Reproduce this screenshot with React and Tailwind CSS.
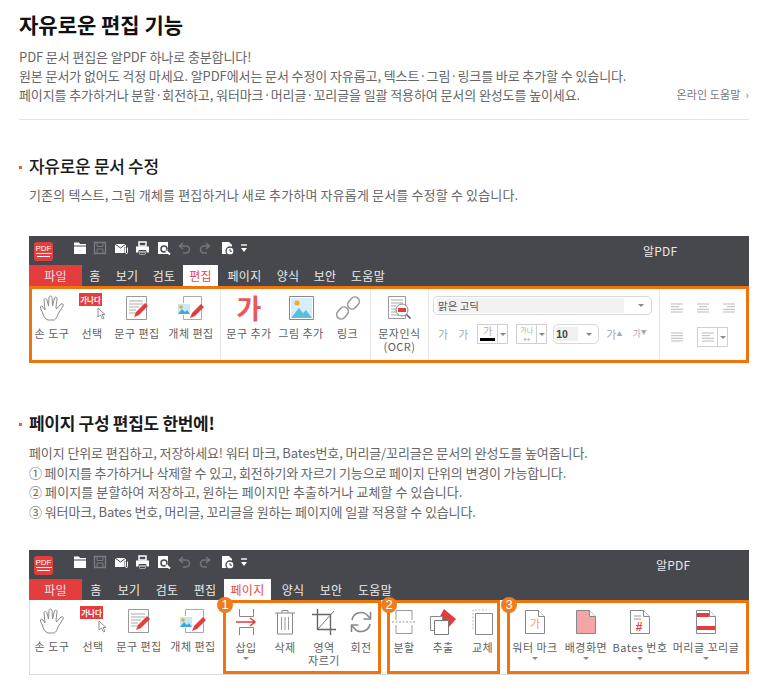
import React from 'react';

const kr = { fontFamily: '"Noto Sans CJK KR", "Noto Sans", sans-serif' };

const Svg = ({ w = 30, h = 30, children, className = '' }) => (
  <svg width={w} height={h} viewBox={`0 0 ${w} ${h}`} fill="none" className={className}>
    {children}
  </svg>
);

const PdfLogo = () => (
  <div className="w-[19px] h-[19px] rounded-[3px] bg-[#e33d3d] flex flex-col items-center justify-center">
    <span className="text-[8px] leading-[8px] text-white font-['Liberation_Sans',sans-serif] border-b border-white">PDF</span>
    <span className="w-[13px] h-px bg-white mt-[2px]" />
  </div>
);

const QuickIcons = () => (
  <div className="flex items-center mb-[6px]">
    {/* folder */}
    <Svg w={14} h={14} className="ml-[20px]"><path d="M1 1.500h5l1 1.500h6V13H1z" fill="#fff" /><path d="M1 5h12" stroke="#47484d" /></Svg>
    {/* save, dimmed */}
    <Svg w={14} h={14} className="ml-[6px]"><path d="M1.500 1.500h11v11h-11z" stroke="#777a80" strokeWidth="1.400" /><path d="M4 1.500h6v4H4zM4 8h6v4.500H4z" stroke="#777a80" /></Svg>
    {/* mail with clip */}
    <Svg w={15} h={14} className="ml-[7px]"><path d="M1 3h11v9H1z" fill="#fff" /><path d="M1 3l5.500 4L12 3" stroke="#47484d" /><path d="M10.500 6h4v8h-4z" fill="#47484d" /><path d="M11.500 6.500v5a1 1 0 002 0v-5" stroke="#fff" /></Svg>
    {/* print */}
    <Svg w={15} h={15} className="ml-[6px]"><path d="M4 1h7v4H4z" stroke="#fff" strokeWidth="1.500" /><path d="M1 5.500h13v6H1z" fill="#fff" /><path d="M4 9.500h7V14H4z" fill="#fff" stroke="#47484d" /><path d="M5 11h5M5 12.500h5" stroke="#47484d" /></Svg>
    {/* preview */}
    <Svg w={15} h={15} className="ml-[7px]"><path d="M1 1h10v12H1z" fill="#fff" /><circle cx="7" cy="8" r="3" stroke="#47484d" strokeWidth="1.500" /><path d="M9 10l4 3.500" stroke="#fff" strokeWidth="2" /></Svg>
    {/* undo / redo */}
    <Svg w={13} h={12} className="ml-[6px]"><path d="M5 1L1.500 4 5 7M2 4h6a3 3 0 010 7H5" stroke="#72747a" strokeWidth="1.600" /></Svg>
    <Svg w={13} h={12} className="ml-[7px]"><path d="M8 1l3.500 3L8 7M11 4H6a3 3 0 000 7h3" stroke="#72747a" strokeWidth="1.600" /></Svg>
    {/* document with clock */}
    <Svg w={15} h={15} className="ml-[10px]"><path d="M1 1h7l3 3v9H1z" fill="#fff" /><circle cx="9" cy="10" r="4" fill="#fff" stroke="#47484d" strokeWidth="1.300" /><path d="M9 8v2.200h2" stroke="#47484d" /></Svg>
    {/* customize caret */}
    <Svg w={8} h={9} className="ml-[4px]"><path d="M1 1h6" stroke="#fff" strokeWidth="1.400" /><path d="M1 4h6L4 8z" fill="#fff" /></Svg>
  </div>
);

const TabBar = ({ tabs }) => (
  <div className="flex items-end h-[21px] text-[12px] tracking-[0.3px] text-[#e8e8ea]" style={kr}>
    {tabs.map((t) =>
      t.kind === 'file' ? (
        <div key={t.label} className="bg-[#e33d3d] h-full flex items-center justify-center" style={{ width: t.w }}>{t.label}</div>
      ) : t.kind === 'active' ? (
        <div key={t.label} className="bg-white text-[#e8474a] h-full flex items-center justify-center" style={{ width: t.w, marginLeft: t.ml }}>{t.label}</div>
      ) : (
        <div key={t.label} className="h-full flex items-center justify-center whitespace-nowrap" style={{ width: t.w, marginLeft: t.ml }}>{t.label}</div>
      )
    )}
  </div>
);

const Caret = ({ className = '' }) => (
  <span className={`block w-0 h-0 border-l-[3px] border-r-[3px] border-t-[3px] border-l-transparent border-r-transparent border-t-[#8a8a8a] ${className}`} />
);

const Item = ({ w, label, caret, children }) => (
  <div className="flex flex-col items-center shrink-0" style={{ width: w }}>
    <div className="h-[34px] pt-[2px] box-content flex items-center justify-center">{children}</div>
    <div className="mt-[2px] text-[11px] leading-[13px] tracking-[0.5px] text-[#606060] text-center whitespace-pre-line" style={kr}>{label}</div>
    {caret && <Caret className="mt-[3px]" />}
  </div>
);

const HandIcon = () => (
  <Svg w={26} h={26}>
    <path
      d="M9 25C6 24 5 22 4 19L1.500 13C1 11 3 10.500 4 12L6 15L5 5C5 3 7.500 3 8 5L9.500 11L10 2.500C10 .5 13 .5 13 2.500L13.500 11L15.500 3C16 1.500 18.500 2 18 4L17 12L17.500 14L22 9C23.500 8 25 9.500 24 11L19 19C18 22 17 24 15.500 25Z"
      stroke="#8a8a8a"
      strokeLinejoin="round"
    />
  </Svg>
);

const SelectIcon = () => (
  <div className="relative w-[26px] h-[30px]">
    <span className="absolute left-0 top-0 w-[23px] h-[13px] bg-[#e33d3d] text-white text-[7.500px] leading-[13px] font-bold text-center whitespace-nowrap" style={kr}>가나다</span>
    <svg className="absolute left-[18px] top-[14px]" width="10" height="13" viewBox="0 0 10 13" fill="none"><path d="M1 1v9l2.500-2 2 4 1.500-.8-2-3.700H8z" fill="#fff" stroke="#777" strokeWidth="0.800" /></svg>
  </div>
);

const TextEditIcon = () => (
  <Svg w={26} h={26}>
    <path d="M2.500 1.500h20v23h-20z" fill="#fff" stroke="#999" />
    <path d="M5 6h14M5 9h14M5 12h10M5 15h7M5 18h7" stroke="#aaa" />
    <path d="M10 22l2-5L21 8l3 3-9 9z" fill="#e33d3d" />
  </Svg>
);

const ObjectEditIcon = () => (
  <Svg w={30} h={26}>
    <path d="M7.500 1.500h18v23h-18z" fill="#fff" stroke="#aaa" />
    <path d="M1 8h14v12H1z" fill="#fff" />
    <path d="M2 9h12v10H2z" fill="#c7e9f6" />
    <circle cx="5" cy="12" r="1.800" fill="#f5a623" />
    <path d="M2 19l4-5 3 3 2-2 3 4z" fill="#3ea9d6" />
    <path d="M14 23l2-5 9-9 3 3-9 9z" fill="#e33d3d" />
  </Svg>
);

const AddTextIcon = () => (
  <span className="text-[27px] leading-[30px] font-bold text-[#e8595c]" style={kr}>가</span>
);

const AddImageIcon = () => (
  <Svg w={25} h={24}>
    <path d="M.5 .5h24v23H.5z" fill="#fff" stroke="#888" />
    <path d="M2 2h21v20H2z" fill="#d5eef9" />
    <circle cx="8" cy="7" r="2.500" fill="#f5a623" />
    <path d="M2 22l8-10 4 5 3-3 6 8z" fill="#5bbde4" />
  </Svg>
);

const LinkIcon = () => (
  <Svg w={26} h={26}>
    <rect x="14" y="1.500" width="9" height="13" rx="4.500" transform="rotate(42 18.500 8)" stroke="#999" strokeWidth="1.600" />
    <rect x="3" y="11.500" width="9" height="13" rx="4.500" transform="rotate(42 7.500 18)" stroke="#999" strokeWidth="1.600" />
  </Svg>
);

const OcrIcon = () => (
  <Svg w={26} h={26}>
    <path d="M1.500 1.500h17v22h-17z" fill="#fff" stroke="#999" />
    <path d="M4 5h12M4 8h12M4 11h5M4 14h5M4 17h5M4 20h8" stroke="#aaa" />
    <circle cx="15" cy="15" r="6" fill="#fff" stroke="#888" />
    <path d="M11 13h8v4h-8z" fill="#e33d3d" />
    <path d="M19.500 19.500l4 4" stroke="#555" strokeWidth="1.600" />
  </Svg>
);

const InsertIcon = () => (
  <Svg w={24} h={26}>
    <path d="M5.500 0v7.500h14V0M5.500 26v-7.500h14V26" stroke="#888" />
    <path d="M2 13h19M16 9l5 4-5 4" stroke="#e33d3d" strokeWidth="1.500" />
  </Svg>
);

const TrashIcon = () => (
  <Svg w={22} h={26}>
    <path d="M1 4h20M8 4V1.500h6V4" stroke="#888" />
    <path d="M3.500 4v21h15V4" stroke="#888" />
    <path d="M7.500 8v13M11 8v13M14.500 8v13" stroke="#999" />
  </Svg>
);

const CropIcon = () => (
  <Svg w={24} h={26}>
    <path d="M5.500 0v20.500H24M0 5.500h18.500V26" stroke="#666" strokeWidth="1.400" />
    <path d="M6 20L22 2" stroke="#777" />
  </Svg>
);

const RotateIcon = () => (
  <Svg w={22} h={24}>
    <path d="M2 10a9 9 0 0116-4l2 2M20 14a9 9 0 01-16 4l-2-2" stroke="#888" strokeWidth="1.600" />
    <path d="M20.500 2v7h-7M1.500 22v-7h7" stroke="#888" strokeWidth="1.600" />
  </Svg>
);

const SplitIcon = () => (
  <Svg w={24} h={26}>
    <path d="M4 11V1.500h16V11M4 16v8.500h16V16" stroke="#999" />
    <path d="M0 13h24" stroke="#999" strokeDasharray="2 1.500" />
  </Svg>
);

const ExtractIcon = () => (
  <Svg w={28} h={26}>
    <path d="M15 0l12 10-7 8-10-9z" fill="#e33d3d" />
    <path d="M1.500 7.500h12v14h-12z" fill="#fff" stroke="#888" />
    <path d="M5.500 11.500h14v14h-14z" fill="#fff" stroke="#777" />
  </Svg>
);

const ReplaceIcon = () => (
  <Svg w={22} h={26}>
    <path d="M1 20V1h14" stroke="#bbb" strokeDasharray="2 1.500" />
    <path d="M3.500 4.500h17v21h-17z" fill="#fff" stroke="#888" />
  </Svg>
);

const Page = ({ fill = '#fff', children }) => (
  <Svg w={22} h={26}>
    <path d="M1.500 1.500h13l6 6v17h-19z" fill={fill} stroke="#888" />
    <path d="M14.500 1.500v6h6" fill="#fff" stroke="#888" />
    {children}
  </Svg>
);

const Toolbar = ({ tabs, titleMl, children }) => (
  <div className="ml-[29px] w-[720px]">
    <div className="bg-[#47484d]">
      <div className="flex items-center h-[29px] pl-[5px] pt-[1px]">
        <PdfLogo />
        <QuickIcons />
        <span className="text-[12px] text-[#e8e8ea] tracking-[0.2px]" style={{ ...kr, marginLeft: titleMl }}>알PDF</span>
      </div>
      <TabBar tabs={tabs} />
    </div>
    {children}
  </div>
);

const FontControls = () => (
  <div className="flex flex-col w-[231px] px-[4px] pt-[7px] border-r border-[#e5e5e5] shrink-0">
    <div className="h-[19px] rounded-[5px] border border-[#d8d8d8] flex items-center pl-[3px] pr-[7px] w-[219px]">
      <div className="bg-[#f2f2f2] flex-1 h-[15px] text-[10.500px] leading-[15px] text-[#555] mr-[14px] pl-[1px]" style={kr}>맑은 고딕</div>
      <Caret />
    </div>
    <div className="flex items-center mt-[9px] text-[11px] text-[#aaa]" style={kr}>
      <span className="ml-[5px]">가</span>
      <span className="ml-[10px]">가</span>
      <div className="ml-[9px] w-[31px] h-[20px] border border-[#d0d0d0] flex">
        <div className="w-[20px] border-r border-[#d0d0d0] flex flex-col items-center justify-between pb-[2px]">
          <span className="text-[10px] leading-[12px]">가</span>
          <span className="w-[15px] h-[3px] bg-black" />
        </div>
        <div className="flex-1 flex items-center justify-center"><Caret /></div>
      </div>
      <div className="ml-[8px] w-[31px] h-[20px] border border-[#d0d0d0] flex">
        <div className="w-[20px] border-r border-[#d0d0d0] text-[7px] leading-[9px] text-center pt-px">가나<br />↔</div>
        <div className="flex-1 flex items-center justify-center"><Caret /></div>
      </div>
      <div className="ml-[6px] w-[46px] h-[20px] rounded-[5px] border border-[#d8d8d8] flex items-center pl-[2px] pr-[6px]">
        <span className="w-[22px] bg-[#f0f0f0] text-[10.500px] leading-[14px] text-[#444] font-['Liberation_Sans',sans-serif] font-bold">10</span>
        <Caret className="ml-auto" />
      </div>
      <span className="ml-[7px]">가<sup className="text-[6px]">▲</sup></span>
      <span className="ml-[10px] text-[9px]">가<sup className="text-[6px]">▼</sup></span>
    </div>
  </div>
);

const AlignLines = ({ side }) => (
  <Svg w={14} h={10}>
    <path d="M1 1h12M1 9h12" stroke="#bbb" />
    {side === 'left' && <path d="M1 3.700h8M1 6.300h12" stroke="#bbb" />}
    {side === 'center' && <path d="M3 3.700h8M1 6.300h12" stroke="#bbb" />}
    {side === 'right' && <path d="M5 3.700h8M1 6.300h12" stroke="#bbb" />}
    {side === 'full' && <path d="M1 3.700h12M1 6.300h12" stroke="#bbb" />}
  </Svg>
);

const AlignControls = () => (
  <div className="flex-1 pl-[10px] pt-[14px]">
    <div className="flex gap-[12px]">
      <AlignLines side="left" />
      <AlignLines side="center" />
      <AlignLines side="right" />
    </div>
    <div className="flex items-center mt-[14px]">
      <AlignLines side="full" />
      <div className="ml-[13px] w-[31px] h-[20px] border border-[#d0d0d0] flex">
        <div className="w-[20px] border-r border-[#d0d0d0] flex items-center justify-center"><AlignLines side="left" /></div>
        <div className="flex-1 flex items-center justify-center"><Caret /></div>
      </div>
    </div>
  </div>
);

const Badge = ({ n }) => (
  <span className="absolute -left-[9px] -top-[6px] w-[16px] h-[16px] rounded-full bg-[#f07d1a] text-white text-[13px] leading-[16px] text-center font-['Liberation_Sans',sans-serif]">{n}</span>
);

const Group = ({ n, className, children }) => (
  <div className={`relative flex border-[3px] border-[#f07409] h-full shrink-0 ${className}`}>
    <Badge n={n} />
    {children}
  </div>
);

const SectionTitle = ({ children, className = '' }) => (
  <h3 className={`flex items-center text-[17px] leading-[22px] text-[#1a1a1a] font-medium ml-[19px] tracking-[-0.3px] ${className}`} style={kr}>
    <span className="w-[3px] h-[3px] bg-[#e8681a] mr-[7px] mt-[3px]" />
    {children}
  </h3>
);

const firstTabs = [
  { label: '파일', kind: 'file', w: 53 },
  { label: '홈', w: 12, ml: 7 },
  { label: '보기', w: 22, ml: 15 },
  { label: '검토', w: 22, ml: 15 },
  { label: '편집', kind: 'active', w: 35, ml: 8 },
  { label: '페이지', w: 33, ml: 10 },
  { label: '양식', w: 22, ml: 16 },
  { label: '보안', w: 22, ml: 15 },
  { label: '도움말', w: 34, ml: 15 },
];

const secondTabs = [
  { label: '파일', kind: 'file', w: 53 },
  { label: '홈', w: 12, ml: 8 },
  { label: '보기', w: 22, ml: 16 },
  { label: '검토', w: 22, ml: 16 },
  { label: '편집', w: 22, ml: 16 },
  { label: '페이지', kind: 'active', w: 47, ml: 8 },
  { label: '양식', w: 22, ml: 11 },
  { label: '보안', w: 22, ml: 16 },
  { label: '도움말', w: 34, ml: 16 },
];

const EditItems = ({ widths }) => (
  <>
    <Item w={widths[0]} label="손 도구"><HandIcon /></Item>
    <Item w={widths[1]} label="선택"><SelectIcon /></Item>
    <Item w={widths[2]} label="문구 편집"><TextEditIcon /></Item>
    <Item w={widths[3]} label="개체 편집"><ObjectEditIcon /></Item>
  </>
);

const bodyText = 'text-[13px] leading-[19px] text-[#666] tracking-[-0.1px]';

export default function App() {
  return (
    <div className="w-[773px] h-[694px] overflow-hidden bg-white" style={kr}>
      <h1 className="ml-[19px] pt-[9px] text-[21px] leading-[31px] font-bold text-[#111]">자유로운 편집 기능</h1>

      <div className={`ml-[19px] mt-[7px] w-[730px] ${bodyText}`}>
        <p>PDF 문서 편집은 알PDF 하나로 충분합니다!</p>
        <p>원본 문서가 없어도 걱정 마세요. 알PDF에서는 문서 수정이 자유롭고, 텍스트·그림·링크를 바로 추가할 수 있습니다.</p>
        <div className="flex items-center justify-between">
          <p>페이지를 추가하거나 분할·회전하고, 워터마크·머리글·꼬리글을 일괄 적용하여 문서의 완성도를 높이세요.</p>
          <span className="text-[11px] text-[#777] tracking-[0.1px]">온라인 도움말 &nbsp;›</span>
        </div>
      </div>

      <div className="ml-[19px] w-[730px] mt-[15px] h-px bg-[#e3e3e3]" />

      <SectionTitle className="mt-[35px]">자유로운 문서 수정</SectionTitle>
      <p className="ml-[29px] mt-[8px] text-[13px] leading-[19px] text-[#666] tracking-[0.15px]">
        기존의 텍스트, 그림 개체를 편집하거나 새로 추가하며 자유롭게 문서를 수정할 수 있습니다.
      </p>

      <div className="mt-[32px]">
        <Toolbar tabs={firstTabs} titleMl={395}>
          <div className="h-[77px] border-[3px] border-[#f07409] flex">
            <EditItems widths={[40, 40, 50, 58]} />
            <div className="flex border-l border-[#e5e5e5] shrink-0">
              <Item w={56} label="문구 추가"><AddTextIcon /></Item>
              <Item w={48} label="그림 추가"><AddImageIcon /></Item>
              <Item w={45} label="링크"><LinkIcon /></Item>
            </div>
            <div className="border-l border-r border-[#e5e5e5] shrink-0">
              <Item w={57} label={'문자인식\n(OCR)'}><OcrIcon /></Item>
            </div>
            <FontControls />
            <AlignControls />
          </div>
        </Toolbar>
      </div>

      <SectionTitle className="mt-[49px]"><span className="font-bold">페이지 구성 편집도 한번에!</span></SectionTitle>
      <div className="ml-[29px] mt-[9px] text-[13px] leading-[19.500px] text-[#666] tracking-[-0.1px]">
        <p>페이지 단위로 편집하고, 저장하세요! 워터 마크, Bates번호, 머리글/꼬리글은 문서의 완성도를 높여줍니다.</p>
        <p className="tracking-[-0.15px]">① 페이지를 추가하거나 삭제할 수 있고, 회전하기와 자르기 기능으로 페이지 단위의 변경이 가능합니다.</p>
        <p className="tracking-[0.1px]">② 페이지를 분할하여 저장하고, 원하는 페이지만 추출하거나 교체할 수 있습니다.</p>
        <p>③ 워터마크, Bates 번호, 머리글, 꼬리글을 원하는 페이지에 일괄 적용할 수 있습니다.</p>
      </div>

      <div className="mt-[29px]">
        <Toolbar tabs={secondTabs} titleMl={408}>
          <div className="h-[75px] flex border-l border-b border-[#dcdcdc]">
            <div className="flex pt-[2px] w-[193px] shrink-0">
              <EditItems widths={[44, 38, 54, 54]} />
            </div>
            <Group n="1" className="w-[158px]">
              <Item w={40} label="삽입" caret><InsertIcon /></Item>
              <Item w={38} label="삭제"><TrashIcon /></Item>
              <Item w={40} label={'영역\n자르기'}><CropIcon /></Item>
              <Item w={34} label="회전"><RotateIcon /></Item>
            </Group>
            <Group n="2" className="w-[113px] ml-[6px]">
              <Item w={28} label="분할"><SplitIcon /></Item>
              <Item w={50} label="추출"><ExtractIcon /></Item>
              <Item w={29} label="교체"><ReplaceIcon /></Item>
            </Group>
            <Group n="3" className="w-[242px] ml-[7px]">
              <Item w={50} label="워터 마크" caret>
                <Page><text x="11" y="19" textAnchor="middle" fontSize="11" fill="#f09a9a" fontFamily="Noto Sans CJK KR">가</text></Page>
              </Item>
              <Item w={52} label="배경화면" caret><Page fill="#f4a5a5" /></Item>
              <Item w={56} label="Bates 번호" caret>
                <Page>
                  <path d="M5 7h7M5 10h7" stroke="#999" />
                  <text x="10" y="22" textAnchor="middle" fontSize="12" fontWeight="bold" fill="#e33d3d" fontFamily="Liberation Sans">#</text>
                </Page>
              </Item>
              <Item w={76} label="머리글 꼬리글" caret>
                <Page>
                  <path d="M2 4h12v4H2zM2 17h18v4H2z" fill="#e33d3d" />
                </Page>
              </Item>
            </Group>
          </div>
        </Toolbar>
      </div>
    </div>
  );
}
